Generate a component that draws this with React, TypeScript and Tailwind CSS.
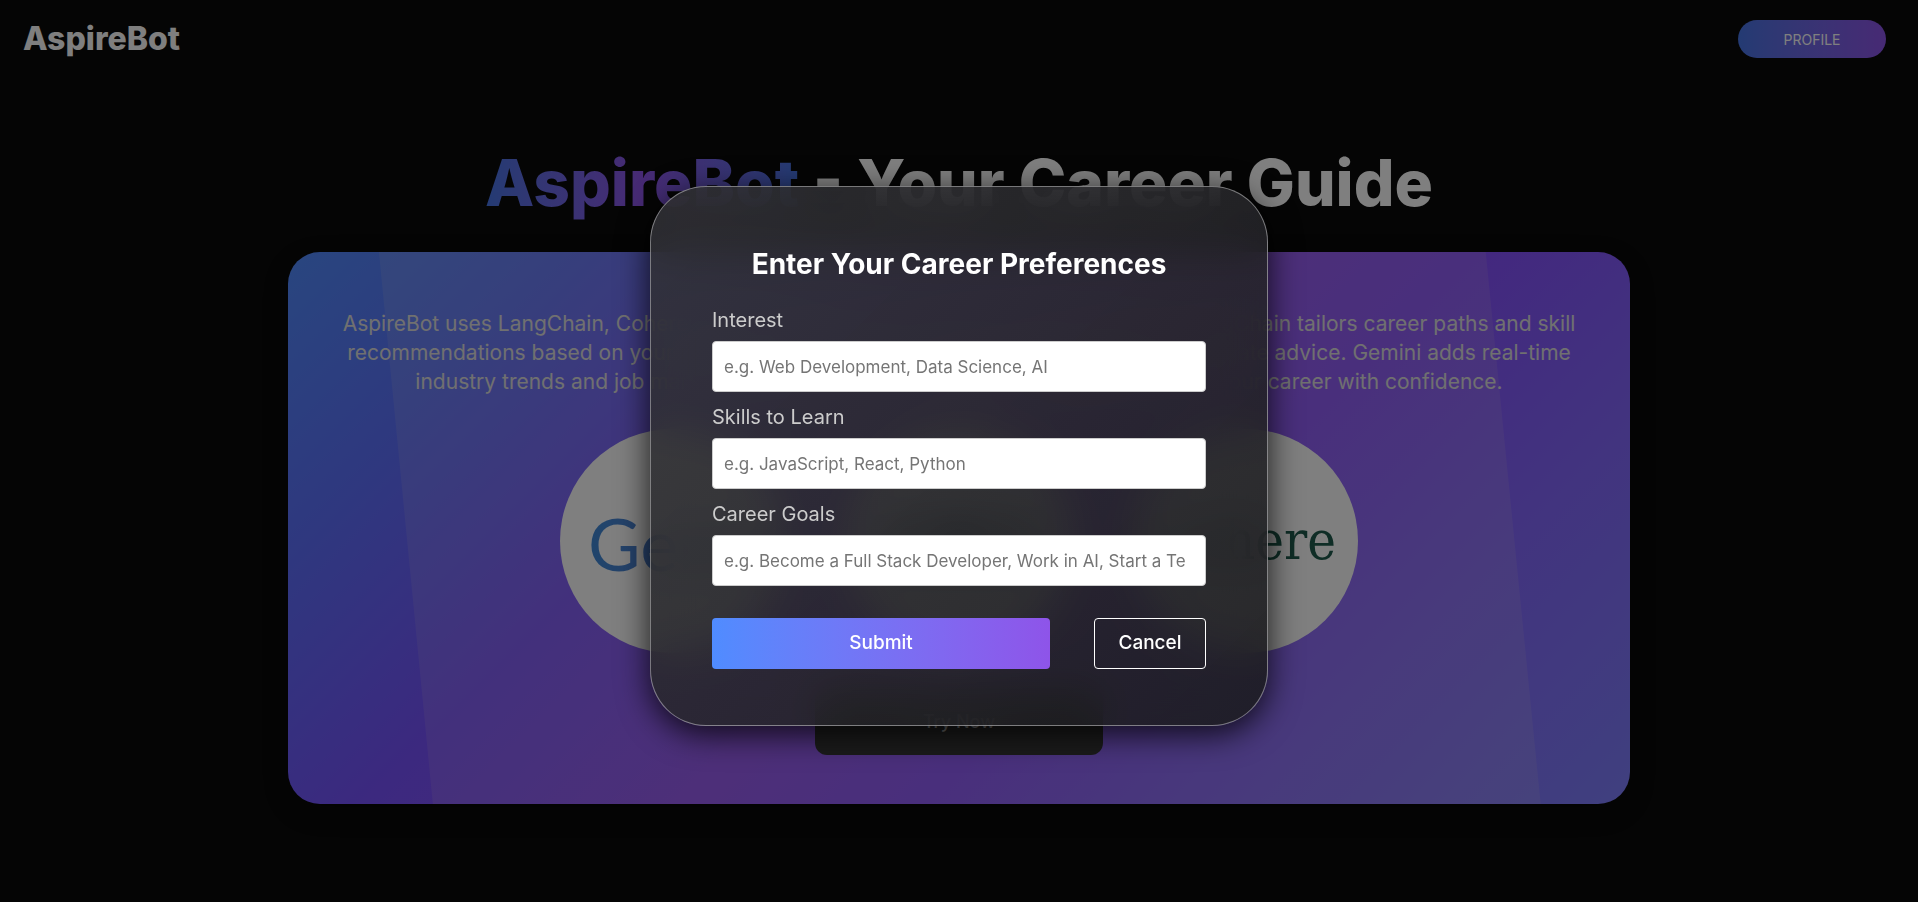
import { FormEvent } from "react";

const paragraph = [
  "AspireBot uses LangChain, Cohere, and Gemini for smart, personal career guidance. LangChain tailors career paths and skill",
  "recommendations based on your profile while Cohere's language models give more accurate advice. Gemini adds real-time",
  "industry trends and job market insights, helping you to explore options and grow your career with confidence.",
];

const fields = [
  { id: "interest", label: "Interest", placeholder: "e.g. Web Development, Data Science, AI" },
  { id: "skills", label: "Skills to Learn", placeholder: "e.g. JavaScript, React, Python" },
  {
    id: "goals",
    label: "Career Goals",
    placeholder: "e.g. Become a Full Stack Developer, Work in AI, Start a Tech Company",
  },
];

function Header() {
  return (
    <header className="flex items-center justify-between py-5 pl-[23px] pr-8">
      <div className="text-[32px] leading-[38px] font-extrabold">AspireBot</div>
      <button
        type="button"
        className="flex h-[38px] w-[148px] items-center justify-center rounded-full bg-linear-to-r from-[#4776e6] to-[#8e54e9] text-[14px]"
      >
        PROFILE
      </button>
    </header>
  );
}

function LangChainMark() {
  return (
    <svg viewBox="0 0 160 80" className="w-40" fill="none" stroke="#1c3c3c" strokeWidth="11">
      <rect x="10" y="22" width="76" height="36" rx="18" />
      <rect x="74" y="22" width="76" height="36" rx="18" />
    </svg>
  );
}

function Logos() {
  const circle = "flex size-56 shrink-0 items-center rounded-full bg-white";
  return (
    <div className="flex justify-center gap-[63px]">
      <div className={`${circle} pl-7 pt-1`}>
        <span className="bg-linear-to-r from-[#3f8ad8] to-[#6a6fc8] bg-clip-text font-['Lato',sans-serif] text-[72px] leading-[88px] text-transparent">
          Gemini
        </span>
      </div>
      <div className={`${circle} justify-center`}>
        <LangChainMark />
      </div>
      <div className={`${circle} justify-end pr-[22px]`}>
        <span className="font-['DejaVu_Serif_Condensed','DejaVu_Serif',serif] text-[54px] leading-none text-[#1f5a4c]">
          cohere
        </span>
      </div>
    </div>
  );
}

function Hero() {
  return (
    <main className="flex flex-col items-center pt-[61px]">
      <h1 className="text-[64px] leading-[88px] font-extrabold whitespace-nowrap">
        <span className="bg-linear-to-r from-[#4776e6] via-[#8e54e9] to-[#4776e6] bg-clip-text text-transparent">
          AspireBot
        </span>{" "}
        - Your Career Guide
      </h1>
      <section className="relative mt-[25px] w-[70%] overflow-hidden rounded-[32px] bg-[linear-gradient(135deg,#528cff_0%,#5e70ff_16%,#7852ff_33%,#9050f8_50%,#8650ff_63%,#8468ff_80%,#8080ff_100%)] pt-[57px] pb-[49px] text-center shadow-[0_8px_24px_rgba(0,0,0,0.3)]">
        <svg
          className="absolute inset-0 size-full"
          viewBox="0 0 1344 552"
          preserveAspectRatio="none"
          aria-hidden="true"
        >
          <polygon points="91,0 1199,0 1254,552 145,552" fill="#ffefc0" fillOpacity="0.1" />
        </svg>
        <div className="relative flex flex-col items-center">
          <p className="text-[21px] leading-[29px] text-[#e0e0e0]">
            {paragraph.map((line) => (
              <span key={line} className="block whitespace-nowrap">
                {line}
              </span>
            ))}
          </p>
          <div className="mt-[33px]">
            <Logos />
          </div>
          <button
            type="button"
            className="mt-[35px] h-[67px] w-72 rounded-xl bg-[#373737] text-[18px] font-medium text-[#cccccc]"
          >
            Try Now
          </button>
        </div>
      </section>
    </main>
  );
}

function PreferencesDialog() {
  const submit = (event: FormEvent) => event.preventDefault();
  return (
    <div className="fixed inset-0 flex items-center justify-center bg-black/50 pt-2.5">
      <form
        role="dialog"
        aria-labelledby="dialog-title"
        onSubmit={submit}
        className="w-[618px] rounded-[56px] border border-white/40 bg-[linear-gradient(135deg,rgba(50,50,54,0.85),rgba(26,26,29,0.87))] px-[61px] pt-[56px] pb-[56px] shadow-[0_8px_32px_rgba(0,0,0,0.8)] backdrop-blur-[20px]"
      >
        <h2 id="dialog-title" className="text-center text-[28px] leading-[42px] font-bold">
          Enter Your Career Preferences
        </h2>
        <div className="mt-5 flex flex-col gap-2.5">
          {fields.map(({ id, label, placeholder }) => (
            <div key={id} className="flex flex-col gap-1.5">
              <label htmlFor={id} className="text-[20px] leading-[30px] text-[#cccccc]">
                {label}
              </label>
              <input
                id={id}
                type="text"
                placeholder={placeholder}
                className="h-[51px] w-full rounded border border-[#cccccc] bg-white pl-[11px] pr-5 text-[17px] text-black placeholder:text-[#757575]"
              />
            </div>
          ))}
        </div>
        <div className="mt-8 flex gap-11">
          <button
            type="submit"
            className="h-[51px] flex-1 rounded bg-linear-to-r from-[#4f8cff] to-[#8e54e9] text-[19px] font-medium"
          >
            Submit
          </button>
          <button
            type="button"
            className="h-[51px] w-28 rounded border border-white text-[19px] font-medium"
          >
            Cancel
          </button>
        </div>
      </form>
    </div>
  );
}

export default function App() {
  return (
    <div className="min-h-screen bg-[#0a0a0a] font-['Inter',sans-serif] text-white">
      <Header />
      <Hero />
      <PreferencesDialog />
    </div>
  );
}
